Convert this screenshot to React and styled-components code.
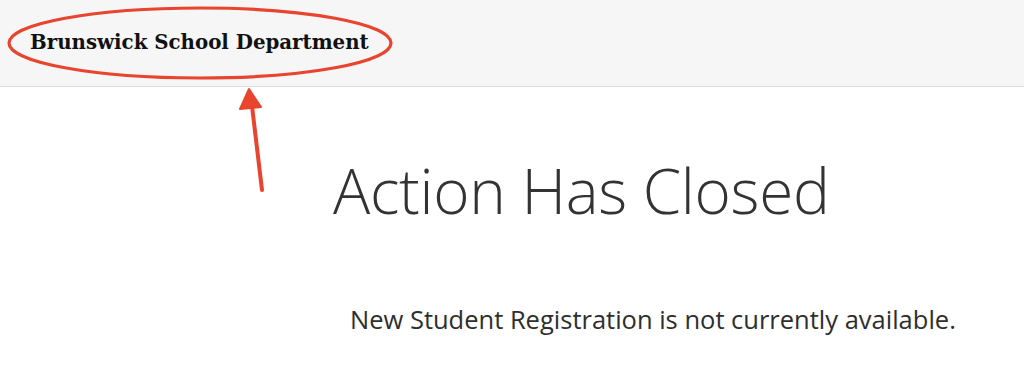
import React from 'react';
import styled, { createGlobalStyle } from 'styled-components';

const GlobalStyle = createGlobalStyle`
  html, body {
    margin: 0;
    padding: 0;
    background: #fff;
  }
  body {
    font-family: "Open Sans", "Liberation Sans", sans-serif;
    color: #333;
  }
`;

const Page = styled.div`
  position: relative;
  width: 1024px;
  height: 385px;
  overflow: hidden;
  background: #fff;
`;

const Header = styled.header`
  height: 87px;
  background: #f6f6f6;
  border-bottom: 1px solid #dcdcdc;
  display: flex;
  align-items: center;
  padding-left: 30px;
  box-sizing: border-box;
`;

const Brand = styled.div`
  font-family: "DejaVu Serif", "Liberation Serif", serif;
  font-weight: bold;
  font-size: 19.8px;
  color: #111;
  margin-top: -2px;
`;

const Main = styled.main`
  padding: 72px 0 0 333px;
`;

const Title = styled.h1`
  margin: 0;
  font-family: "Open Sans", sans-serif;
  font-weight: 300;
  font-size: 62px;
  line-height: 1;
  color: #333;
  letter-spacing: -0.3px;
`;

const Message = styled.p`
  margin: 86px 0 0 17px;
  font-family: "Open Sans", sans-serif;
  font-weight: 500;
  font-size: 25.5px;
  line-height: 1;
  color: #2e2e2e;
`;

const Markup = styled.svg`
  position: absolute;
  left: 0;
  top: 0;
  pointer-events: none;
`;

const RED = '#e8442e';

const Annotation = () => (
  <Markup width="1024" height="385" viewBox="0 0 1024 385">
    <ellipse cx="200" cy="43" rx="191" ry="35" fill="none" stroke={RED} strokeWidth="3.2" />
    <line x1="262" y1="190" x2="252" y2="106" stroke={RED} strokeWidth="4" strokeLinecap="round" />
    <polygon points="249,89 240,109 261,107" fill={RED} stroke={RED} strokeWidth="2" strokeLinejoin="round" />
  </Markup>
);

const App = () => (
  <Page>
    <GlobalStyle />
    <Header>
      <Brand>Brunswick School Department</Brand>
    </Header>
    <Main>
      <Title>Action Has Closed</Title>
      <Message>New Student Registration is not currently available.</Message>
    </Main>
    <Annotation />
  </Page>
);

export default App;
